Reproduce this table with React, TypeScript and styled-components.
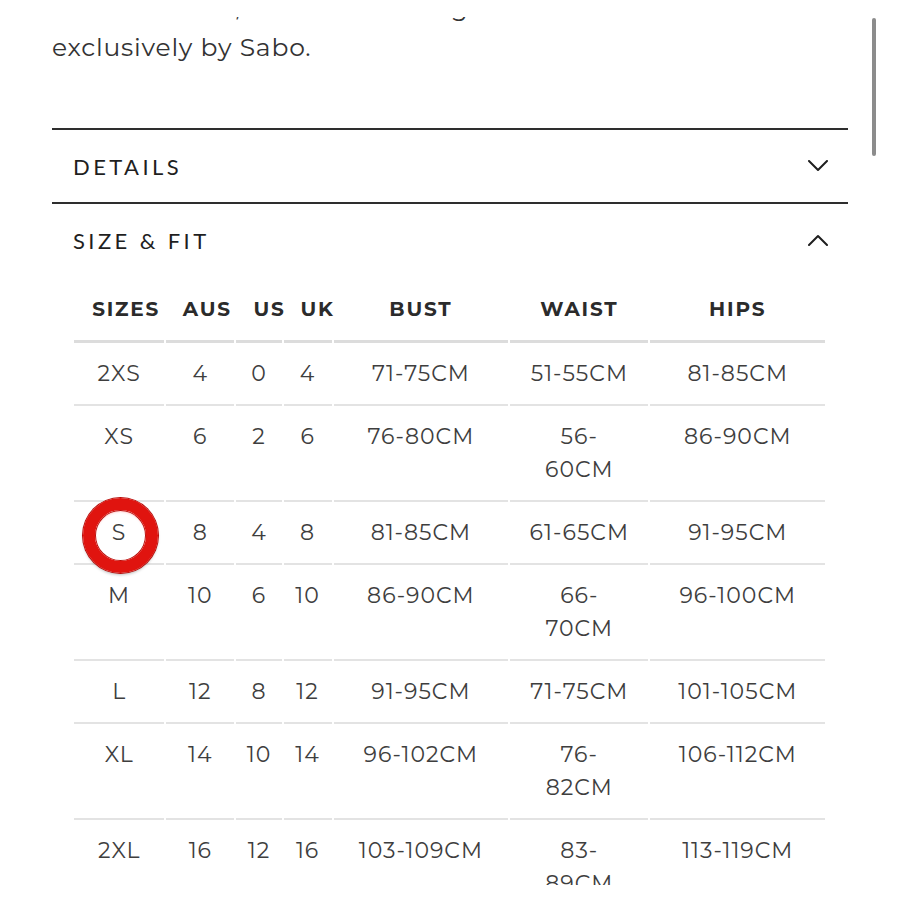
import React from "react";
import styled, { createGlobalStyle } from "styled-components";

const GlobalStyle = createGlobalStyle`
  html, body { margin: 0; padding: 0; background: #ffffff; }
  body { font-family: "DejaVu Sans", "Liberation Sans", sans-serif; }
`;

const Page = styled.div`
  position: relative;
  width: 900px;
  height: 885px;
  overflow: hidden;
  background: #fff;
`;

const Content = styled.div`
  padding: 0 52px;
`;

const IntroClip = styled.div`
  margin: 17px 0 61px;
  overflow: hidden;
`;

const Intro = styled.p`
  margin: -30px 0 0;
  font-family: "Montserrat", "DejaVu Sans", sans-serif;
  font-weight: 400;
  font-size: 25px;
  line-height: 40px;
  letter-spacing: 0.8px;
  color: #333333;
  white-space: nowrap;
`;

const ScrollThumb = styled.div`
  position: absolute;
  left: 872px;
  top: 18px;
  width: 4px;
  height: 138px;
  border-radius: 2px;
  background: #8c8c8c;
`;

const Section = styled.section`
  border-top: 2px solid #2e2e2e;
`;

const SectionHeader = styled.div`
  height: 72px;
  display: flex;
  align-items: center;
  justify-content: space-between;
  padding: 0 20px 0 21px;
`;

const SectionTitle = styled.span`
  font-family: "Lato", "Liberation Sans", sans-serif;
  font-size: 22px;
  letter-spacing: 3.4px;
  color: #1f1f1f;
`;

const Chevron = ({ up }: { up?: boolean }) => (
  <svg width="20" height="12" viewBox="0 0 20 12" fill="none">
    <polyline
      points={up ? "1,11 10,2 19,11" : "1,1 10,10 19,1"}
      stroke="#1f1f1f"
      strokeWidth="2"
      strokeLinecap="round"
      strokeLinejoin="round"
    />
  </svg>
);

const TableWrap = styled.div`
  padding: 17px 0 0 20px;
`;

const SizeTable = styled.table`
  table-layout: fixed;
  border-collapse: separate;
  border-spacing: 2px 0;
  width: 755px;
  font-family: "Montserrat", "DejaVu Sans", sans-serif;
`;

const Th = styled.th<{ $offset: number }>`
  padding: 0 0 14px ${(p) => p.$offset}px;
  font-size: 20px;
  line-height: 33px;
  font-weight: 700;
  letter-spacing: 1.8px;
  color: #2b2b2b;
  text-align: center;
  border-bottom: 3px solid #dcdcdc;
  white-space: nowrap;
`;

const Td = styled.td`
  padding: 14px 0;
  font-size: 22px;
  line-height: 33px;
  font-weight: 400;
  letter-spacing: 1px;
  color: #3e3e3e;
  text-align: center;
  vertical-align: top;
  border-bottom: 2px solid #e3e3e3;
  white-space: nowrap;
`;

const Ring = styled.div`
  position: absolute;
  left: 83px;
  top: 498px;
  width: 51px;
  height: 51px;
  border-radius: 50%;
  border: 12px solid #e0140f;
  box-shadow: 0 0 0 1px #b80d0a, inset 0 0 0 1px #b80d0a,
    inset 0 2px 2px rgba(255, 120, 120, 0.35), 0 2px 3px rgba(0, 0, 0, 0.25);
`;

const columns: { label: string; width: number; offset: number }[] = [
  { label: "SIZES", width: 90, offset: 14 },
  { label: "AUS", width: 68, offset: 14 },
  { label: "US", width: 45, offset: 17 },
  { label: "UK", width: 48, offset: 17 },
  { label: "BUST", width: 174, offset: 0 },
  { label: "WAIST", width: 138, offset: 0 },
  { label: "HIPS", width: 174, offset: 0 },
];

type Row = { s: string; aus: string; us: string; uk: string; bust: string; waist: string; hips: string };

const rows: Row[] = [
  { s: "2XS", aus: "4", us: "0", uk: "4", bust: "71-75CM", waist: "51-55CM", hips: "81-85CM" },
  { s: "XS", aus: "6", us: "2", uk: "6", bust: "76-80CM", waist: "56-60CM", hips: "86-90CM" },
  { s: "S", aus: "8", us: "4", uk: "8", bust: "81-85CM", waist: "61-65CM", hips: "91-95CM" },
  { s: "M", aus: "10", us: "6", uk: "10", bust: "86-90CM", waist: "66-70CM", hips: "96-100CM" },
  { s: "L", aus: "12", us: "8", uk: "12", bust: "91-95CM", waist: "71-75CM", hips: "101-105CM" },
  { s: "XL", aus: "14", us: "10", uk: "14", bust: "96-102CM", waist: "76-82CM", hips: "106-112CM" },
  { s: "2XL", aus: "16", us: "12", uk: "16", bust: "103-109CM", waist: "83-89CM", hips: "113-119CM" },
];

const wrapped = new Set(["56-60CM", "66-70CM", "76-82CM", "83-89CM"]);

function renderWaist(w: string) {
  if (!wrapped.has(w)) return w;
  const [a, b] = w.split("-");
  return (
    <>
      {a}-<br />
      {b}
    </>
  );
}

export default function App() {
  return (
    <>
      <GlobalStyle />
      <Page>
        <Content>
          <IntroClip>
            <Intro>
              A modern cut, the item is designed and crafted in
              <br />
              exclusively by Sabo.
            </Intro>
          </IntroClip>
          <Section>
            <SectionHeader>
              <SectionTitle>DETAILS</SectionTitle>
              <Chevron />
            </SectionHeader>
          </Section>
          <Section>
            <SectionHeader>
              <SectionTitle>SIZE &amp; FIT</SectionTitle>
              <Chevron up />
            </SectionHeader>
            <TableWrap>
              <SizeTable>
                <colgroup>
                  {columns.map((c) => (
                    <col key={c.label} style={{ width: c.width }} />
                  ))}
                </colgroup>
                <thead>
                  <tr>
                    {columns.map((c) => (
                      <Th key={c.label} $offset={c.offset}>
                        {c.label}
                      </Th>
                    ))}
                  </tr>
                </thead>
                <tbody>
                  {rows.map((r) => (
                    <tr key={r.s}>
                      <Td>{r.s}</Td>
                      <Td>{r.aus}</Td>
                      <Td>{r.us}</Td>
                      <Td>{r.uk}</Td>
                      <Td>{r.bust}</Td>
                      <Td>{renderWaist(r.waist)}</Td>
                      <Td>{r.hips}</Td>
                    </tr>
                  ))}
                </tbody>
              </SizeTable>
            </TableWrap>
          </Section>
        </Content>
        <ScrollThumb />
        <Ring />
      </Page>
    </>
  );
}
